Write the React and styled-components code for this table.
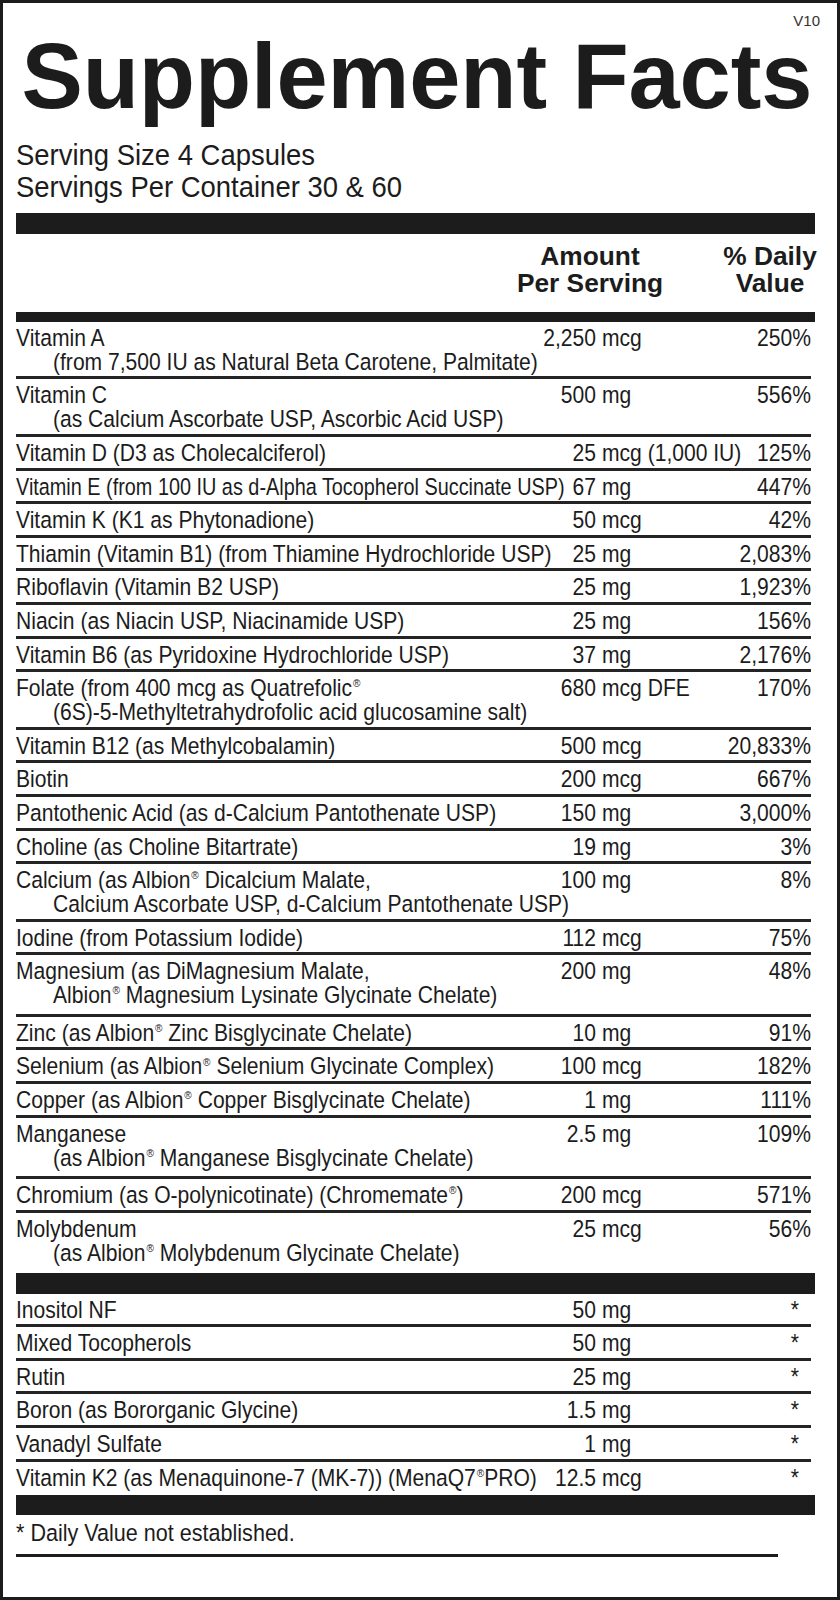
import React from "react";
import styled, { createGlobalStyle } from "styled-components";

const SANS = `"Liberation Sans", Arial, Helvetica, sans-serif`;
const INK = "#1c1c1c";
const SQ = 0.86; /* horizontal condensing of the label's narrow face */

const Global = createGlobalStyle`
  html, body { margin: 0; padding: 0; background: #fff; }
  * { box-sizing: border-box; }
`;

const Page = styled.div`
  width: 840px;
  height: 1600px;
  border: 3px solid ${INK};
  padding: 0 22px 0 13px;
  background: #fff;
  color: ${INK};
  display: flex;
  flex-direction: column;
  overflow: hidden;
`;

const Version = styled.div`
  align-self: flex-end;
  margin: 10px -5px 0 0;
  font: 15px/15px ${SANS};
  color: #333;
`;

const Title = styled.h1`
  margin: 1.5px 0 0 5.5px;
  font: bold 92px/92px ${SANS};
  letter-spacing: -0.1px;
  white-space: nowrap;
`;

const Serving = styled.div`
  margin-top: 17px;
  font: 30px/32px ${SANS};
  white-space: nowrap;
  transform: scaleX(0.915);
  transform-origin: left center;
`;

const Bar = styled.div`
  height: ${(p) => p.$h}px;
  margin-top: ${(p) => p.$mt}px;
  background: ${INK};
  flex-shrink: 0;
`;

const Header = styled.div`
  display: grid;
  grid-template-columns: 1fr 150px 98px;
  column-gap: 56px;
  margin: 9.7px -4px 0 0;
  font: bold 26.3px/27px ${SANS};
`;

const HeadCol = styled.div`
  text-align: center;
`;

const Section = styled.div`
  display: flex;
  flex-direction: column;
  margin-right: 4px;
`;

const Row = styled.div`
  display: grid;
  grid-template-columns: 514px minmax(0, 1fr) 110px;
  padding: 4px 0 ${(p) => (p.$loose ? 6.6 : 2.6)}px;
  border-bottom: 3px solid #242424;
  font: 24.5px/24px ${SANS};
  &:last-child {
    border-bottom: none;
  }
`;

const Name = styled.div`
  white-space: nowrap;
  min-width: 0;
  transform: scaleX(${(p) => (p.$tight ? 0.81 : SQ)});
  transform-origin: left center;
`;

const SubLine = styled.div`
  padding-left: ${37 / SQ}px;
`;

const Amount = styled.div`
  display: flex;
  min-width: 0;
  white-space: nowrap;
  transform: scaleX(${SQ});
  transform-origin: left center;
`;

const Num = styled.span`
  width: ${66 / SQ}px;
  text-align: right;
  flex-shrink: 0;
`;

const Unit = styled.span`
  margin-left: 7px;
  flex-shrink: 0;
`;

const DV = styled.div`
  min-width: 0;
  text-align: right;
  white-space: nowrap;
  padding-right: ${(p) => (p.$star ? 14 : 0)}px;
  transform: scaleX(${SQ});
  transform-origin: right center;
`;

const Reg = styled.sup`
  font-size: 0.48em;
  vertical-align: 0.75em;
  line-height: 0;
  margin-left: 1px;
`;

const Footnote = styled.div`
  margin-top: 6px;
  font: 24.5px/24px ${SANS};
  white-space: nowrap;
  transform: scaleX(0.88);
  transform-origin: left center;
`;

const Rule = styled.div`
  margin-top: 9px;
  width: 762px;
  height: 3px;
  background: ${INK};
`;

const withReg = (s) =>
  s.split("®").map((part, i) => (
    <React.Fragment key={i}>
      {i > 0 && <Reg>®</Reg>}
      {part}
    </React.Fragment>
  ));

const vitamins = [
  { n: "Vitamin A", s: "(from 7,500 IU as Natural Beta Carotene, Palmitate)", a: ["2,250", "mcg"], d: "250%" },
  { n: "Vitamin C", s: "(as Calcium Ascorbate USP, Ascorbic Acid USP)", a: ["500", "mg"], d: "556%" },
  { n: "Vitamin D (D3 as Cholecalciferol)", a: ["25", "mcg (1,000 IU)"], d: "125%" },
  { n: "Vitamin E (from 100 IU as d-Alpha Tocopherol Succinate USP)", a: ["67", "mg"], d: "447%", tight: true },
  { n: "Vitamin K (K1 as Phytonadione)", a: ["50", "mcg"], d: "42%" },
  { n: "Thiamin (Vitamin B1) (from Thiamine Hydrochloride USP)", a: ["25", "mg"], d: "2,083%" },
  { n: "Riboflavin (Vitamin B2 USP)", a: ["25", "mg"], d: "1,923%" },
  { n: "Niacin (as Niacin USP, Niacinamide USP)", a: ["25", "mg"], d: "156%" },
  { n: "Vitamin B6 (as Pyridoxine Hydrochloride USP)", a: ["37", "mg"], d: "2,176%" },
  { n: "Folate (from 400 mcg as Quatrefolic®", s: "(6S)-5-Methyltetrahydrofolic acid glucosamine salt)", a: ["680", "mcg DFE"], d: "170%" },
  { n: "Vitamin B12 (as Methylcobalamin)", a: ["500", "mcg"], d: "20,833%" },
  { n: "Biotin", a: ["200", "mcg"], d: "667%" },
  { n: "Pantothenic Acid (as d-Calcium Pantothenate USP)", a: ["150", "mg"], d: "3,000%" },
  { n: "Choline (as Choline Bitartrate)", a: ["19", "mg"], d: "3%" },
  { n: "Calcium (as Albion® Dicalcium Malate,", s: "Calcium Ascorbate USP, d-Calcium Pantothenate USP)", a: ["100", "mg"], d: "8%" },
  { n: "Iodine (from Potassium Iodide)", a: ["112", "mcg"], d: "75%" },
  { n: "Magnesium (as DiMagnesium Malate,", s: "Albion® Magnesium Lysinate Glycinate Chelate)", a: ["200", "mg"], d: "48%", loose: true },
  { n: "Zinc (as Albion® Zinc Bisglycinate Chelate)", a: ["10", "mg"], d: "91%" },
  { n: "Selenium (as Albion® Selenium Glycinate Complex)", a: ["100", "mcg"], d: "182%" },
  { n: "Copper (as Albion® Copper Bisglycinate Chelate)", a: ["1", "mg"], d: "111%" },
  { n: "Manganese", s: "(as Albion® Manganese Bisglycinate Chelate)", a: ["2.5", "mg"], d: "109%", loose: true },
  { n: "Chromium (as O-polynicotinate) (Chromemate®)", a: ["200", "mcg"], d: "571%" },
  { n: "Molybdenum", s: "(as Albion® Molybdenum Glycinate Chelate)", a: ["25", "mcg"], d: "56%", loose: true },
];

const others = [
  { n: "Inositol NF", a: ["50", "mg"] },
  { n: "Mixed Tocopherols", a: ["50", "mg"] },
  { n: "Rutin", a: ["25", "mg"] },
  { n: "Boron (as Bororganic Glycine)", a: ["1.5", "mg"] },
  { n: "Vanadyl Sulfate", a: ["1", "mg"] },
  { n: "Vitamin K2 (as Menaquinone-7 (MK-7)) (MenaQ7®PRO)", a: ["12.5", "mcg"] },
];

function FactRow({ item, star }) {
  return (
    <Row $loose={item.loose}>
      <Name $tight={item.tight}>
        <div>{withReg(item.n)}</div>
        {item.s && <SubLine>{withReg(item.s)}</SubLine>}
      </Name>
      <Amount>
        <Num>{item.a[0]}</Num>
        <Unit>{item.a[1]}</Unit>
      </Amount>
      <DV $star={star}>{star ? "*" : item.d}</DV>
    </Row>
  );
}

export default function App() {
  return (
    <>
      <Global />
      <Page>
        <Version>V10</Version>
        <Title>Supplement Facts</Title>
        <Serving>
          <div>Serving Size 4 Capsules</div>
          <div>Servings Per Container 30 &amp; 60</div>
        </Serving>
        <Bar $h={21} $mt={10.3} />
        <Header>
          <span />
          <HeadCol>
            Amount
            <br />
            Per Serving
          </HeadCol>
          <HeadCol>
            % Daily
            <br />
            Value
          </HeadCol>
        </Header>
        <Bar $h={10} $mt={14.3} />
        <Section>
          {vitamins.map((v) => (
            <FactRow key={v.n} item={v} />
          ))}
        </Section>
        <Bar $h={21} $mt={1.2} />
        <Section>
          {others.map((v) => (
            <FactRow key={v.n} item={v} star />
          ))}
        </Section>
        <Bar $h={20} $mt={2.4} />
        <Footnote>* Daily Value not established.</Footnote>
        <Rule />
      </Page>
    </>
  );
}
